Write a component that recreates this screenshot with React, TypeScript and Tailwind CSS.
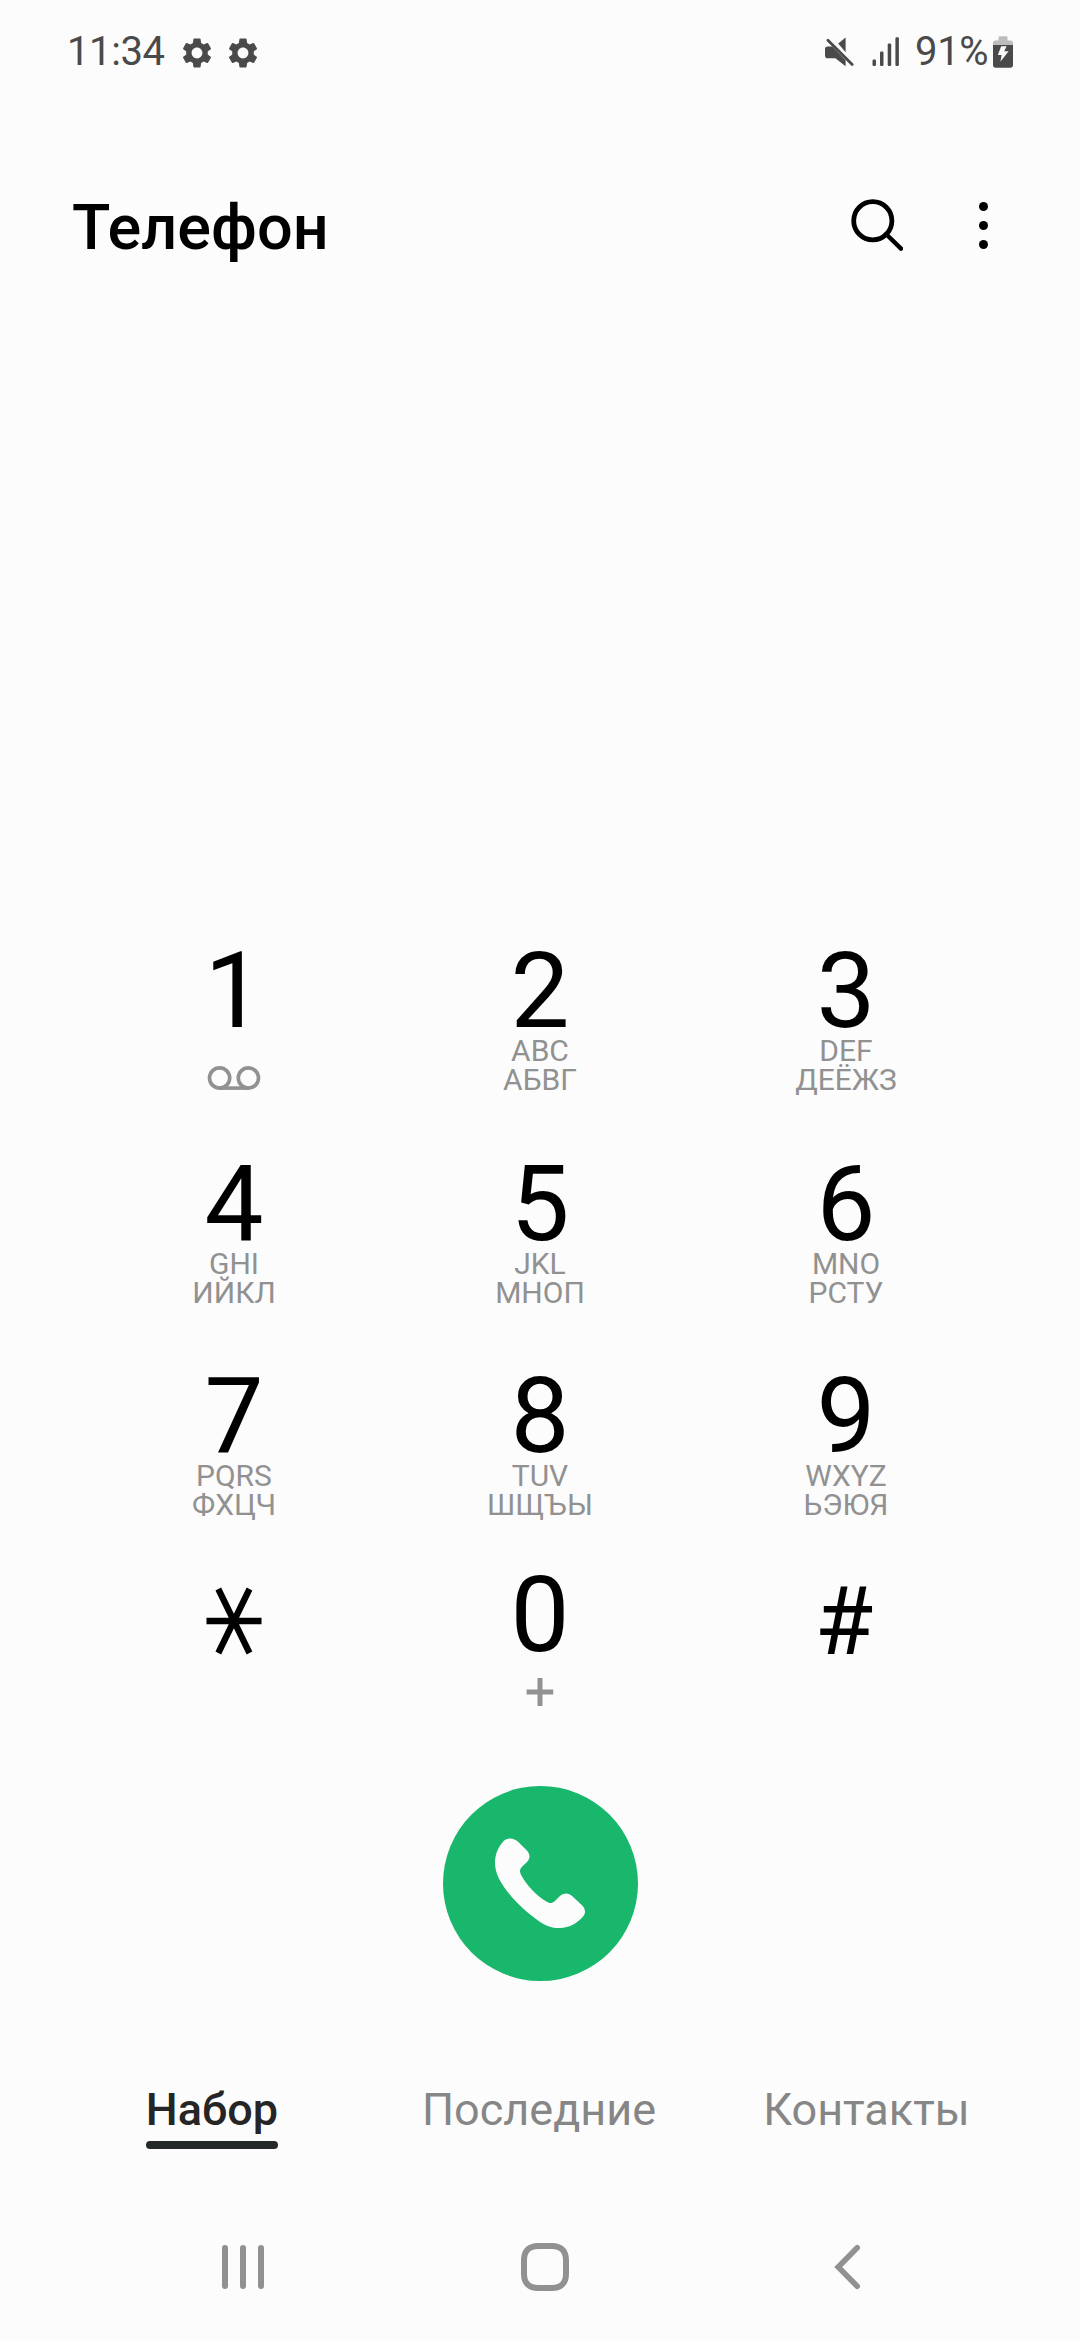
import type { ReactNode } from "react";
import { MdSettings } from "react-icons/md";

type Key = {
  digit: ReactNode;
  latin?: string;
  cyrillic?: string;
  extra?: ReactNode;
};

function MuteIcon() {
  return (
    <svg className="w-[32px] h-[32px]" viewBox="0 0 32 32" fill="#4a4a4a">
      <path d="M14.2 7.6 21.6 1.6 V16.2 Z" />
      <path d="M3.6 10.6 H8.2 L21.6 24.3 V30.3 L11.4 22.2 H3.6 Q1 22.2 1 19.4 V13.4 Q1 10.6 3.6 10.6 Z" />
      <path d="M3.9 4.2 28.2 28.6" stroke="#4a4a4a" strokeWidth="2.8" strokeLinecap="round" />
    </svg>
  );
}

function SignalIcon() {
  return (
    <svg className="w-[28px] h-[30px]" viewBox="0 0 28 30" fill="#4a4a4a">
      <rect x="0.5" y="22.5" width="3.5" height="6.5" rx="1.2" />
      <rect x="8" y="14.6" width="3.5" height="14.4" rx="1.2" />
      <rect x="15.7" y="6.4" width="3.5" height="22.6" rx="1.2" />
      <rect x="23.4" y="0.3" width="3.5" height="28.7" rx="1.2" />
    </svg>
  );
}

function BatteryIcon() {
  return (
    <svg className="w-[20px] h-[32px]" viewBox="0 0 20 32">
      <path d="M5.5 4.5 V1.5 Q5.5 0.3 6.7 0.3 H13.3 Q14.5 0.3 14.5 1.5 V4.5 H17.5 Q20 4.5 20 7 V9 H0 V7 Q0 4.5 2.5 4.5 Z" fill="#bdbdbd" />
      <path d="M0 9 H20 V29 Q20 31.7 17.3 31.7 H2.7 Q0 31.7 0 29 Z" fill="#4a4a4a" />
      <path d="M8.2 10.2 H13.6 L11.2 15.2 H15.6 L7.4 25.8 L8.6 18.9 H4.8 Z" fill="#fcfcfc" />
    </svg>
  );
}

function SearchIcon() {
  return (
    <svg className="w-[54px] h-[54px]" viewBox="0 0 54 54" fill="none" stroke="#000" strokeWidth="4.8">
      <circle cx="23.8" cy="23.8" r="19.1" />
      <path d="M37 37 52 51.6" strokeLinecap="round" strokeWidth="4.4" />
    </svg>
  );
}

function VoicemailIcon() {
  return (
    <svg className="w-[54px] h-[24px]" viewBox="0 0 54 24" fill="none" stroke="#919191" strokeWidth="3.6">
      <circle cx="12.6" cy="12" r="10.1" />
      <circle cx="41.4" cy="12" r="10.1" />
      <path d="M12.6 22.1 H41.4" />
    </svg>
  );
}

function StarIcon() {
  return (
    <svg className="w-[56px] h-[68px]" viewBox="0 0 56 68" fill="none" stroke="#000" strokeWidth="6.3">
      <path d="M0.5 34 H55.5 M12.3 2 L43.5 66 M43.5 2 L12.3 66" />
    </svg>
  );
}

function PlusIcon() {
  return (
    <svg className="w-[28px] h-[28px]" viewBox="0 0 28 28" fill="none" stroke="#919191" strokeWidth="5">
      <path d="M0.6 14 H27.2 M14 0 V28" />
    </svg>
  );
}

const keys: Key[] = [
  { digit: "1", extra: <div className="mt-[30px]"><VoicemailIcon /></div> },
  { digit: "2", latin: "ABC", cyrillic: "АБВГ" },
  { digit: "3", latin: "DEF", cyrillic: "ДЕЁЖЗ" },
  { digit: "4", latin: "GHI", cyrillic: "ИЙКЛ" },
  { digit: "5", latin: "JKL", cyrillic: "МНОП" },
  { digit: "6", latin: "MNO", cyrillic: "РСТУ" },
  { digit: "7", latin: "PQRS", cyrillic: "ФХЦЧ" },
  { digit: "8", latin: "TUV", cyrillic: "ШЩЪЫ" },
  { digit: "9", latin: "WXYZ", cyrillic: "ЬЭЮЯ" },
  { digit: <div className="pt-[17px]"><StarIcon /></div> },
  { digit: "0", extra: <div className="mt-[18px]"><PlusIcon /></div> },
  { digit: <div className="pr-[4px] text-[95px] leading-[104px]">#</div> },
];

function KeyButton({ item }: { item: Key }) {
  return (
    <button className="flex flex-col items-center">
      <div className="h-[90px] text-[105px] leading-[91px] text-black">{item.digit}</div>
      {item.latin && (
        <div className="text-[30px] leading-[29.3px] text-[#919191]">
          <div>{item.latin}</div>
          <div>{item.cyrillic}</div>
        </div>
      )}
      {item.extra}
    </button>
  );
}

export default function App() {
  return (
    <div className="w-[1080px] h-[2340px] bg-[#fcfcfc] font-[Roboto,sans-serif] flex flex-col overflow-hidden">
      <header className="h-[104px] shrink-0 pl-[67px] pr-[67px] flex items-center justify-between text-[40px] text-[#4a4a4a]">
        <div className="flex items-center">
          <span className="w-[112px] leading-[40px] tracking-[-0.4px]">11:34</span>
          <MdSettings className="w-[36px] h-[36px] mt-[2px]" />
          <MdSettings className="w-[36px] h-[36px] mt-[2px] ml-[10px]" />
        </div>
        <div className="flex items-center">
          <MuteIcon />
          <div className="ml-[16px]"><SignalIcon /></div>
          <span className="w-[78px] ml-[15px] leading-[40px] tracking-[-0.3px]">91%</span>
          <BatteryIcon />
        </div>
      </header>

      <div className="h-[242px] shrink-0 mt-[46px] mb-[554px] pl-[72px] pr-[92px] flex items-start justify-between">
        <h1 className="mt-[40px] text-[63px] leading-[76px] font-medium text-black">Телефон</h1>
        <div className="flex items-start mt-[47px]">
          <SearchIcon />
          <div className="flex flex-col gap-[10px] ml-[76px] mt-[5px]">
            <span className="w-[9px] h-[9px] rounded-full bg-black" />
            <span className="w-[9px] h-[9px] rounded-full bg-black" />
            <span className="w-[9px] h-[9px] rounded-full bg-black" />
          </div>
        </div>
      </div>

      <main className="shrink-0 px-[81px] h-[840px] grid grid-cols-3 grid-rows-[212.5px_212.5px_198.5px_216.5px]">
        {keys.map((item, index) => (
          <KeyButton key={index} item={item} />
        ))}
      </main>

      <div className="flex justify-center">
        <button className="w-[195px] h-[195px] rounded-full bg-[#18b76c]">
          <svg className="w-[195px] h-[195px]" viewBox="36 47 585 585" fill="#fcfcfc">
            <path d="M216 214 C228 201 248 201 262 215 L287 240 C298 252 298 264 288 275 L273 289 C266 296 265 304 270 313 C288 347 316 374 345 393 C355 400 363 400 371 393 L386 378 C398 367 412 367 424 378 L453 405 C464 416 465 430 455 440 C436 461 414 472 388 473 C364 474 344 466 322 451 C279 422 230 374 204 325 C193 305 190 280 193 262 C196 243 204 228 216 214 Z" />
          </svg>
        </button>
      </div>

      <nav className="mt-[102px] h-[66px] shrink-0 flex text-[45px] leading-[54px] text-[#868686]">
        <div className="w-[132px] ml-[146px] h-[66px] flex flex-col items-center justify-between">
          <span className="font-medium text-[#252525]">Набор</span>
          <span className="w-[132px] h-[8px] rounded-full bg-[#252828]" />
        </div>
        <span className="ml-[144px]">Последние</span>
        <span className="ml-[107px]">Контакты</span>
      </nav>

      <footer className="mt-[93px] h-[50px] shrink-0 pl-[222px] flex items-center">
        <div className="flex gap-[12px]">
          <span className="w-[6px] h-[44px] rounded-full bg-[#919191]" />
          <span className="w-[6px] h-[44px] rounded-full bg-[#919191]" />
          <span className="w-[6px] h-[44px] rounded-full bg-[#919191]" />
        </div>
        <svg className="w-[50px] h-[50px] ml-[256px]" viewBox="0 0 50 50" fill="none" stroke="#919191" strokeWidth="6">
          <path d="M18 4 H32 C41 4 46 9 46 18 V32 C46 41 41 46 32 46 H18 C9 46 4 41 4 32 V18 C4 9 9 4 18 4 Z" />
        </svg>
        <svg className="w-[27px] h-[46px] ml-[264px]" viewBox="0 0 27 46" fill="none" stroke="#919191" strokeWidth="5.6" strokeLinecap="round">
          <path d="M23.2 3.7 4.2 23 L23.2 42.3" />
        </svg>
      </footer>
    </div>
  );
}
